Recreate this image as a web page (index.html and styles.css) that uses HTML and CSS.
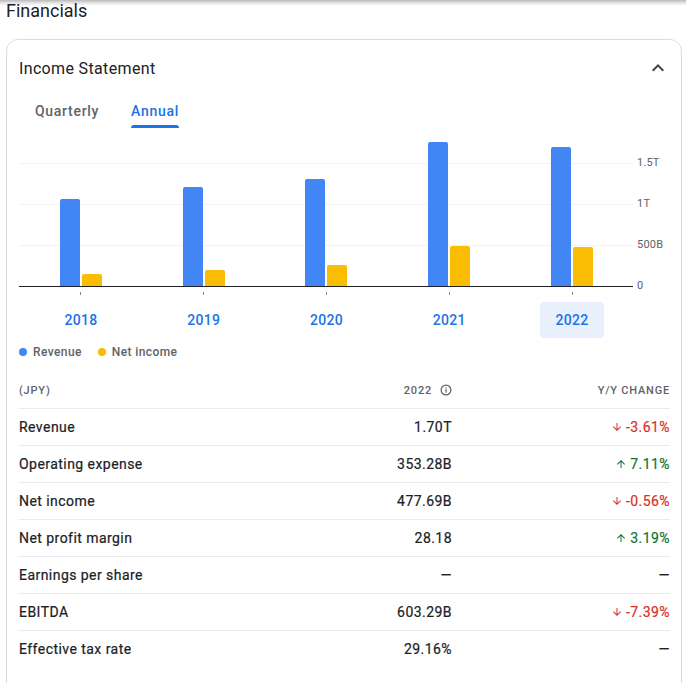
FILE: index.html
```html
<!DOCTYPE html>
<html lang="en">
<head>
<meta charset="utf-8">
<title>Financials</title>
<link rel="stylesheet" href="styles.css">
</head>
<body>
<h2 class="page-title">Financials</h2>
<section class="card">
  <div class="card-head">
    <h3 class="card-title">Income Statement</h3>
    <svg class="chev" viewBox="0 0 24 24" width="24" height="24"><path d="M12 8l-6 6 1.41 1.41L12 10.83l4.59 4.58L18 14z" fill="#3c4043"/></svg>
  </div>
  <div class="tabs">
    <div class="tab">Quarterly</div>
    <div class="tab active">Annual</div>
  </div>
  <div class="chart">
    <div class="plot-row">
      <div class="plot">
        <div class="group"><div class="bar rev" style="height:87px"></div><div class="bar ni" style="height:12px"></div></div>
        <div class="group"><div class="bar rev" style="height:99px"></div><div class="bar ni" style="height:16px"></div></div>
        <div class="group"><div class="bar rev" style="height:107px"></div><div class="bar ni" style="height:21px"></div></div>
        <div class="group"><div class="bar rev" style="height:144px"></div><div class="bar ni" style="height:40px"></div></div>
        <div class="group"><div class="bar rev" style="height:139px"></div><div class="bar ni" style="height:39px"></div></div>
      </div>
      <div class="axis">
        <span class="tick-label" style="bottom:123px">1.5T</span>
        <span class="tick-label" style="bottom:82px">1T</span>
        <span class="tick-label" style="bottom:41px">500B</span>
        <span class="tick-label" style="bottom:0px">0</span>
      </div>
    </div>
    <div class="x-row">
      <div class="x-cell"><span class="tick"></span><span class="year">2018</span></div>
      <div class="x-cell"><span class="tick"></span><span class="year">2019</span></div>
      <div class="x-cell"><span class="tick"></span><span class="year">2020</span></div>
      <div class="x-cell"><span class="tick"></span><span class="year">2021</span></div>
      <div class="x-cell"><span class="tick"></span><span class="year selected">2022</span></div>
    </div>
  </div>
  <div class="legend">
    <span class="leg"><span class="dot rev"></span>Revenue</span>
    <span class="leg"><span class="dot ni"></span>Net income</span>
  </div>
  <div class="table">
    <div class="row head">
      <span class="c-label">(JPY)</span>
      <span class="c-val">2022 <svg class="info" viewBox="0 0 12 12" width="12" height="12"><circle cx="6" cy="6" r="4.9" fill="none" stroke="#5f6368" stroke-width="1.2"/><rect x="5.4" y="5.2" width="1.2" height="3.4" fill="#5f6368"/><rect x="5.4" y="3.3" width="1.2" height="1.2" fill="#5f6368"/></svg></span>
      <span class="c-chg">Y/Y change</span>
    </div>
    <div class="row">
      <span class="c-label">Revenue</span><span class="c-val">1.70T</span>
      <span class="c-chg down"><svg class="arr" viewBox="0 0 24 24" width="12" height="12"><path d="M20 12l-1.41-1.41L13 16.17V4h-2v12.17l-5.58-5.59L4 12l8 8 8-8z" fill="currentColor"/></svg>-3.61%</span>
    </div>
    <div class="row">
      <span class="c-label">Operating expense</span><span class="c-val">353.28B</span>
      <span class="c-chg up"><svg class="arr" viewBox="0 0 24 24" width="12" height="12"><path d="M4 12l1.41 1.41L11 7.83V20h2V7.83l5.58 5.59L20 12l-8-8-8 8z" fill="currentColor"/></svg>7.11%</span>
    </div>
    <div class="row">
      <span class="c-label">Net income</span><span class="c-val">477.69B</span>
      <span class="c-chg down"><svg class="arr" viewBox="0 0 24 24" width="12" height="12"><path d="M20 12l-1.41-1.41L13 16.17V4h-2v12.17l-5.58-5.59L4 12l8 8 8-8z" fill="currentColor"/></svg>-0.56%</span>
    </div>
    <div class="row">
      <span class="c-label">Net profit margin</span><span class="c-val">28.18</span>
      <span class="c-chg up"><svg class="arr" viewBox="0 0 24 24" width="12" height="12"><path d="M4 12l1.41 1.41L11 7.83V20h2V7.83l5.58 5.59L20 12l-8-8-8 8z" fill="currentColor"/></svg>3.19%</span>
    </div>
    <div class="row">
      <span class="c-label">Earnings per share</span><span class="c-val">—</span>
      <span class="c-chg">—</span>
    </div>
    <div class="row">
      <span class="c-label">EBITDA</span><span class="c-val">603.29B</span>
      <span class="c-chg down"><svg class="arr" viewBox="0 0 24 24" width="12" height="12"><path d="M20 12l-1.41-1.41L13 16.17V4h-2v12.17l-5.58-5.59L4 12l8 8 8-8z" fill="currentColor"/></svg>-7.39%</span>
    </div>
    <div class="row last">
      <span class="c-label">Effective tax rate</span><span class="c-val">29.16%</span>
      <span class="c-chg">—</span>
    </div>
  </div>
</section>
</body>
</html>
```

FILE: styles.css
```css
html, body {
  margin: 0;
  padding: 0;
}
body {
  font-family: Roboto, "Liberation Sans", Arial, sans-serif;
  color: #202124;
  background: #fff linear-gradient(#b9b9b9, #e6e6e6 3px, #fff 6px) no-repeat;
  background-size: 100% 6px;
  height: 683px;
  overflow: hidden;
}
.page-title {
  margin: 0;
  padding: 0 0 0 6px;
  font-size: 18px;
  font-weight: 400;
  line-height: 22px;
  height: 22px;
  color: #202124;
}
.card {
  margin: 17px 4px 0 6px;
  border: 1px solid #dadce0;
  border-radius: 12px;
  padding: 16px 11px 0 12px;
  height: 640px;
}
.card-head {
  display: flex;
  align-items: center;
  justify-content: space-between;
  height: 24px;
}
.card-title {
  margin: 0;
  font-size: 16px;
  font-weight: 400;
  letter-spacing: 0.35px;
  color: #202124;
}
.chev { display: block; }
.tabs {
  display: flex;
  gap: 0;
  margin-top: 12px;
  height: 36px;
}
.tab {
  padding: 9px 16px 0;
  font-size: 14px;
  font-weight: 500;
  line-height: 20px;
  color: #5f6368;
  letter-spacing: 0.7px;
}
.tab.active {
  color: #1a73e8;
}
.tab.active::after {
  content: "";
  display: block;
  margin-top: 4px;
  height: 3px;
  border-radius: 3px 3px 0 0;
  background: #1a73e8;
}
.chart {
  margin-top: 8px;
}
.plot-row {
  display: flex;
}
.plot {
  width: 614px;
  height: 150px;
  display: flex;
  border-bottom: 1px solid #202124;
  background: repeating-linear-gradient(to top, transparent 0 40px, #f1f3f4 40px 41px);
}
.group {
  flex: 1;
  display: flex;
  justify-content: center;
  align-items: flex-end;
  gap: 2px;
  padding-left: 1px;
}
.bar {
  width: 20px;
  border-radius: 2px 2px 0 0;
}
.rev { background: #4285f4; }
.ni { background: #fbbc04; }
.axis {
  position: relative;
  flex: 1;
  height: 150px;
}
.tick-label {
  position: absolute;
  left: 4px;
  transform: translateY(50%);
  font-size: 11px;
  line-height: 14px;
  color: #5f6368;
  letter-spacing: 0.2px;
}
.x-row {
  display: flex;
  width: 614px;
}
.x-cell {
  flex: 1;
  display: flex;
  flex-direction: column;
  align-items: center;
  padding-left: 1px;
}
.tick {
  display: block;
  width: 1px;
  height: 3px;
  margin-top: 5px;
  background: #80868b;
}
.year {
  margin-top: 7px;
  width: 64px;
  height: 36px;
  line-height: 36px;
  text-align: center;
  border-radius: 4px;
  font-size: 14px;
  font-weight: 500;
  color: #1a73e8;
  letter-spacing: 0.3px;
}
.year.selected {
  background: #e8f0fe;
}
.legend {
  display: flex;
  gap: 16px;
  margin-top: 4px;
  height: 20px;
  align-items: center;
}
.leg {
  display: flex;
  align-items: center;
  gap: 6px;
  font-size: 12px;
  font-weight: 500;
  color: #5f6368;
  letter-spacing: 0.4px;
}
.dot {
  width: 8px;
  height: 8px;
  border-radius: 50%;
}
.table {
  margin-top: 10px;
  width: 651px;
}
.row {
  display: grid;
  grid-template-columns: 1fr 160px 218px;
  align-items: center;
  height: 36px;
  border-bottom: 1px solid #e8eaed;
  font-size: 14px;
  font-weight: 400;
  color: #202124;
  letter-spacing: 0.45px;
  -webkit-text-stroke: 0.2px #202124;
}
.row.last { border-bottom: none; }
.row.head {
  font-size: 11px;
  font-weight: 500;
  color: #5f6368;
  letter-spacing: 0.8px;
  text-transform: uppercase;
  -webkit-text-stroke: 0;
}
.c-val {
  text-align: right;
  display: flex;
  justify-content: flex-end;
  align-items: center;
  gap: 8px;
}
.c-chg {
  display: flex;
  justify-content: flex-end;
  align-items: center;
  gap: 3px;
}
.down { color: #d93025; -webkit-text-stroke-color: #d93025; }
.up { color: #137333; -webkit-text-stroke-color: #137333; }
.arr { display: block; }
.info { display: block; }
```
